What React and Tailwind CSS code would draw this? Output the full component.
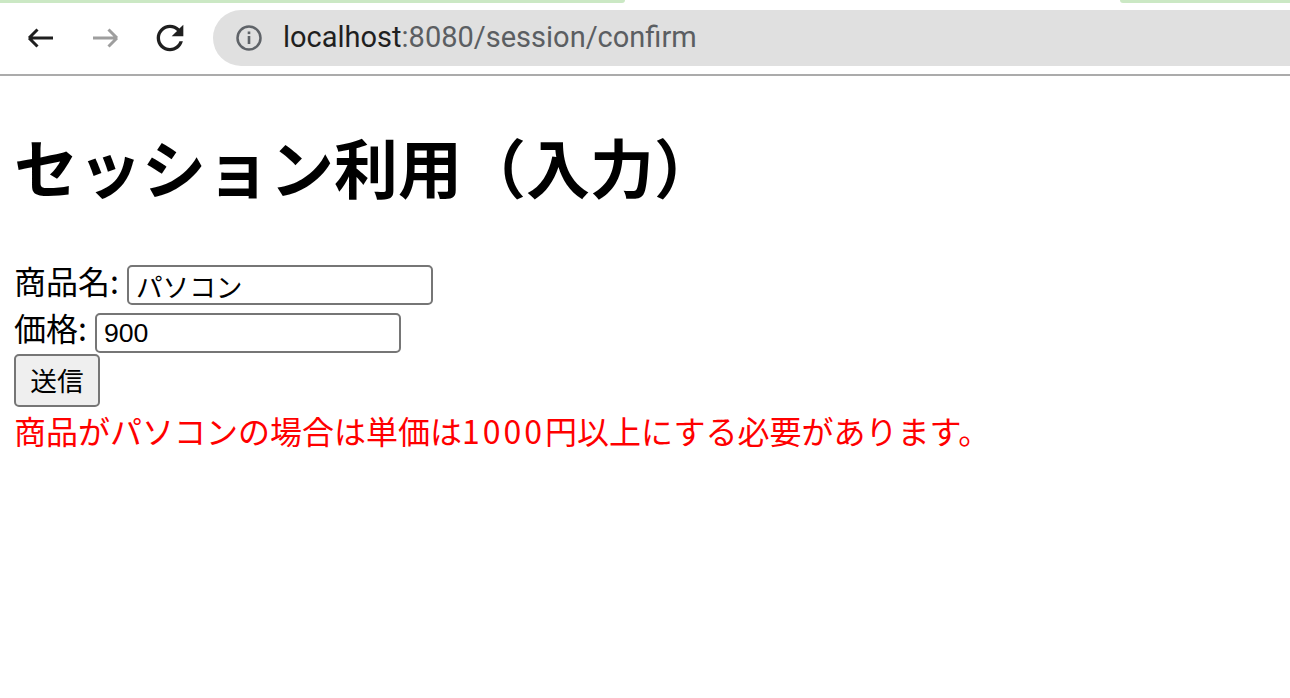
import React from "react";

function BackIcon({ color }) {
  return (
    <svg width="30" height="24" viewBox="0 0 30 24" fill="none">
      <path d="M3 12 H27 M3 12 L11.5 3.5 M3 12 L11.5 20.5" stroke={color} strokeWidth="3" strokeLinecap="butt" />
    </svg>
  );
}

function ForwardIcon({ color }) {
  return (
    <svg width="30" height="24" viewBox="0 0 30 24" fill="none">
      <path d="M3 12 H27 M27 12 L18.5 3.5 M27 12 L18.5 20.5" stroke={color} strokeWidth="3" strokeLinecap="butt" />
    </svg>
  );
}

function ReloadIcon() {
  return (
    <svg width="40" height="40" viewBox="0 0 24 24">
      <path
        fill="#1f1f1f"
        d="M17.65 6.35C16.2 4.9 14.21 4 12 4c-4.42 0-7.99 3.58-7.99 8s3.57 8 7.99 8c3.73 0 6.84-2.55 7.730-6h-2.08c-.82 2.33-3.04 4-5.65 4-3.31 0-6-2.690-6-6s2.69-6 6-6c1.66 0 3.14.69 4.22 1.78L13 11h7V4l-2.35 2.35z"
      />
    </svg>
  );
}

function InfoIcon() {
  return (
    <svg width="28" height="28" viewBox="0 0 28 28" fill="none">
      <circle cx="14" cy="14" r="11.5" stroke="#5f6368" strokeWidth="2.5" />
      <rect x="12.7" y="12" width="2.6" height="8" fill="#5f6368" />
      <rect x="12.7" y="7.5" width="2.6" height="2.6" fill="#5f6368" />
    </svg>
  );
}

export default function App() {
  return (
    <div className="w-[1290px] h-[698px] bg-white overflow-hidden">
      {/* browser chrome */}
      <div className="h-[76px] border-b-2 border-[#ababab] bg-white flex flex-col">
        <div className="h-[3px] flex">
          <div className="w-[625px] h-[3px] bg-[#cbe8c4] rounded-br-[3px]" />
          <div className="flex-1" />
          <div className="w-[170px] h-[3px] bg-[#cbe8c4] rounded-bl-[3px]" />
        </div>
        <div className="flex items-center h-[70px] pb-[1px]">
          <div className="flex items-center w-[213px]">
            <div className="ml-[26px] flex items-center">
              <BackIcon color="#1f1f1f" />
            </div>
            <div className="ml-[34px] flex items-center">
              <ForwardIcon color="#9e9e9e" />
            </div>
            <div className="ml-[30px] flex items-center">
              <ReloadIcon />
            </div>
          </div>
          <div className="flex-1 h-[56px] bg-[#e0e0e0] rounded-l-[28px] flex items-center pl-[22px]">
            <InfoIcon />
            <div className="ml-[20px] font-['Roboto',sans-serif] text-[29px] leading-none">
              <span className="text-[#1f1f1f]">localhost</span>
              <span className="text-[#5b5e62]">:8080/session/confirm</span>
            </div>
          </div>
        </div>
      </div>

      {/* page */}
      <div className="pl-[14px] font-['Noto_Sans_CJK_JP',sans-serif] text-black">
        <h1 className="mt-[57px] text-[64px] leading-[64px] font-bold">セッション利用（入力）</h1>

        <div className="mt-[64px] flex items-start h-[48px]">
          <span className="mt-[3px] text-[32px] leading-[32px]">商品名:</span>
          <input
            readOnly
            value="パソコン"
            className="mt-[4px] ml-[8px] w-[306px] h-[40px] border-2 border-[#767676] rounded-[5px] px-[7px] text-[26.67px] leading-none font-['Liberation_Sans','Noto_Sans_CJK_JP',sans-serif] text-black bg-white outline-none"
          />
        </div>
        <div className="flex items-start h-[45px]">
          <span className="mt-[2px] text-[32px] leading-[32px]">価格:</span>
          <input
            readOnly
            value="900"
            className="mt-[4px] ml-[8px] w-[306px] h-[40px] border-2 border-[#767676] rounded-[5px] px-[7px] text-[26.67px] leading-none font-['Liberation_Sans','Noto_Sans_CJK_JP',sans-serif] text-black bg-white outline-none"
          />
        </div>
        <button className="w-[86px] h-[53px] bg-[#efefef] border-2 border-[#767676] rounded-[5px] text-[26.67px] leading-none text-black flex items-center justify-center">
          送信
        </button>
        <p className="mt-[7px] text-[32px] leading-[32px] text-[#ff0000]">
          商品がパソコンの場合は単価は<span className="tracking-[3px]">1000</span>円以上にする必要があります。
        </p>
      </div>
    </div>
  );
}
